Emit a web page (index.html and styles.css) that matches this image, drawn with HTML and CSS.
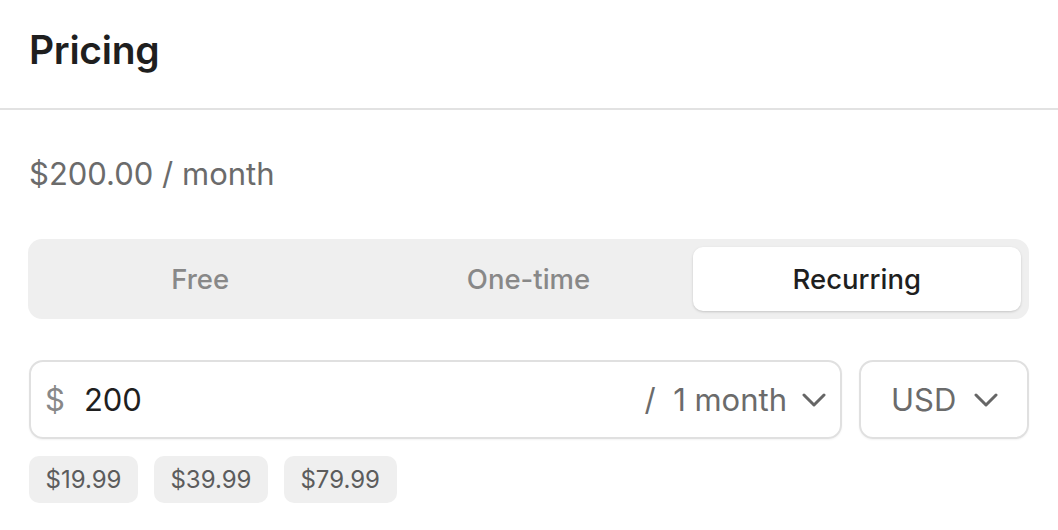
FILE: index.html
```html
<!DOCTYPE html>
<html>
<head>
<meta charset="utf-8">
<link rel="stylesheet" href="styles.css">
</head>
<body>
<div class="panel">
  <header class="header">
    <h1 class="title">Pricing</h1>
  </header>
  <div class="body">
    <div class="summary">$200.00 / month</div>
    <div class="segmented">
      <div class="seg">Free</div>
      <div class="seg">One-time</div>
      <div class="seg seg-active">Recurring</div>
    </div>
    <div class="inputs">
      <div class="field amount">
        <span class="cur">$</span>
        <span class="value">200</span>
        <span class="period">/&nbsp; 1 month</span>
        <svg class="chev" width="24" height="14" viewBox="0 0 24 14"><path d="M2 2l10 10 10-10" fill="none" stroke="#666" stroke-width="3" stroke-linecap="round" stroke-linejoin="round"/></svg>
      </div>
      <div class="field currency">
        <span class="code">USD</span>
        <svg class="chev" width="24" height="14" viewBox="0 0 24 14"><path d="M2 2l10 10 10-10" fill="none" stroke="#666" stroke-width="3" stroke-linecap="round" stroke-linejoin="round"/></svg>
      </div>
    </div>
    <div class="chips">
      <span class="chip">$19.99</span>
      <span class="chip">$39.99</span>
      <span class="chip">$79.99</span>
    </div>
  </div>
</div>
</body>
</html>
```
FILE: styles.css
```css
* { box-sizing: border-box; }
html, body { margin: 0; padding: 0; background: #fff; }
body { font-family: Inter, "Noto Sans", sans-serif; color: #1f1f1f; }

.header {
  height: 110px;
  border-bottom: 2px solid #e2e2e2;
  padding: 0 28px;
  display: flex;
  align-items: center;
}
.title {
  margin: 0;
  font-size: 39px;
  font-weight: 600;
  letter-spacing: -0.3px;
  color: #1f1f1f;
  position: relative;
  top: -5px;
  left: 1px;
}

.body { padding: 0 29px 0 28px; }

.summary {
  margin-top: 46px;
  font-size: 31px;
  line-height: 36px;
  color: #6b6b6b;
  padding-left: 1px;
}

.segmented {
  margin-top: 47px;
  height: 80px;
  background: #efefef;
  border-radius: 14px;
  padding: 8px;
  display: grid;
  grid-template-columns: 1fr 1fr 1fr;
}
.seg {
  display: flex;
  align-items: center;
  justify-content: center;
  font-size: 27.5px;
  font-weight: 500;
  color: #888;
  border-radius: 10px;
}
.seg-active {
  background: #fff;
  color: #1f1f1f;
  box-shadow: 0 1px 3px rgba(0,0,0,0.12), 0 1px 2px rgba(0,0,0,0.06);
}

.inputs {
  margin-top: 41px;
  display: flex;
  gap: 17px;
}
.field {
  height: 79px;
  border: 2px solid #e0e0e0;
  border-radius: 14px;
  display: flex;
  align-items: center;
  box-shadow: 0 1px 2px rgba(0,0,0,0.05);
}
.amount {
  flex: 1;
  padding: 0 14px 0 14px;
  margin-left: 1px;
}
.cur { font-size: 31px; color: #888; }
.value { font-size: 31px; color: #1f1f1f; margin-left: 19px; flex: 1; }
.period { font-size: 31px; color: #6b6b6b; }
.chev { margin-left: 15px; flex: none; }
.currency {
  width: 170px;
  padding: 0 29px 0 30px;
  justify-content: space-between;
}
.code { font-size: 31px; color: #6b6b6b; }

.chips {
  margin-top: 17px;
  display: flex;
  gap: 16px;
  padding-left: 1px;
}
.chip {
  height: 47px;
  padding: 0 16.5px;
  background: #efefef;
  border-radius: 10px;
  font-size: 24px;
  color: #5c5c5c;
  display: flex;
  align-items: center;
}
```
